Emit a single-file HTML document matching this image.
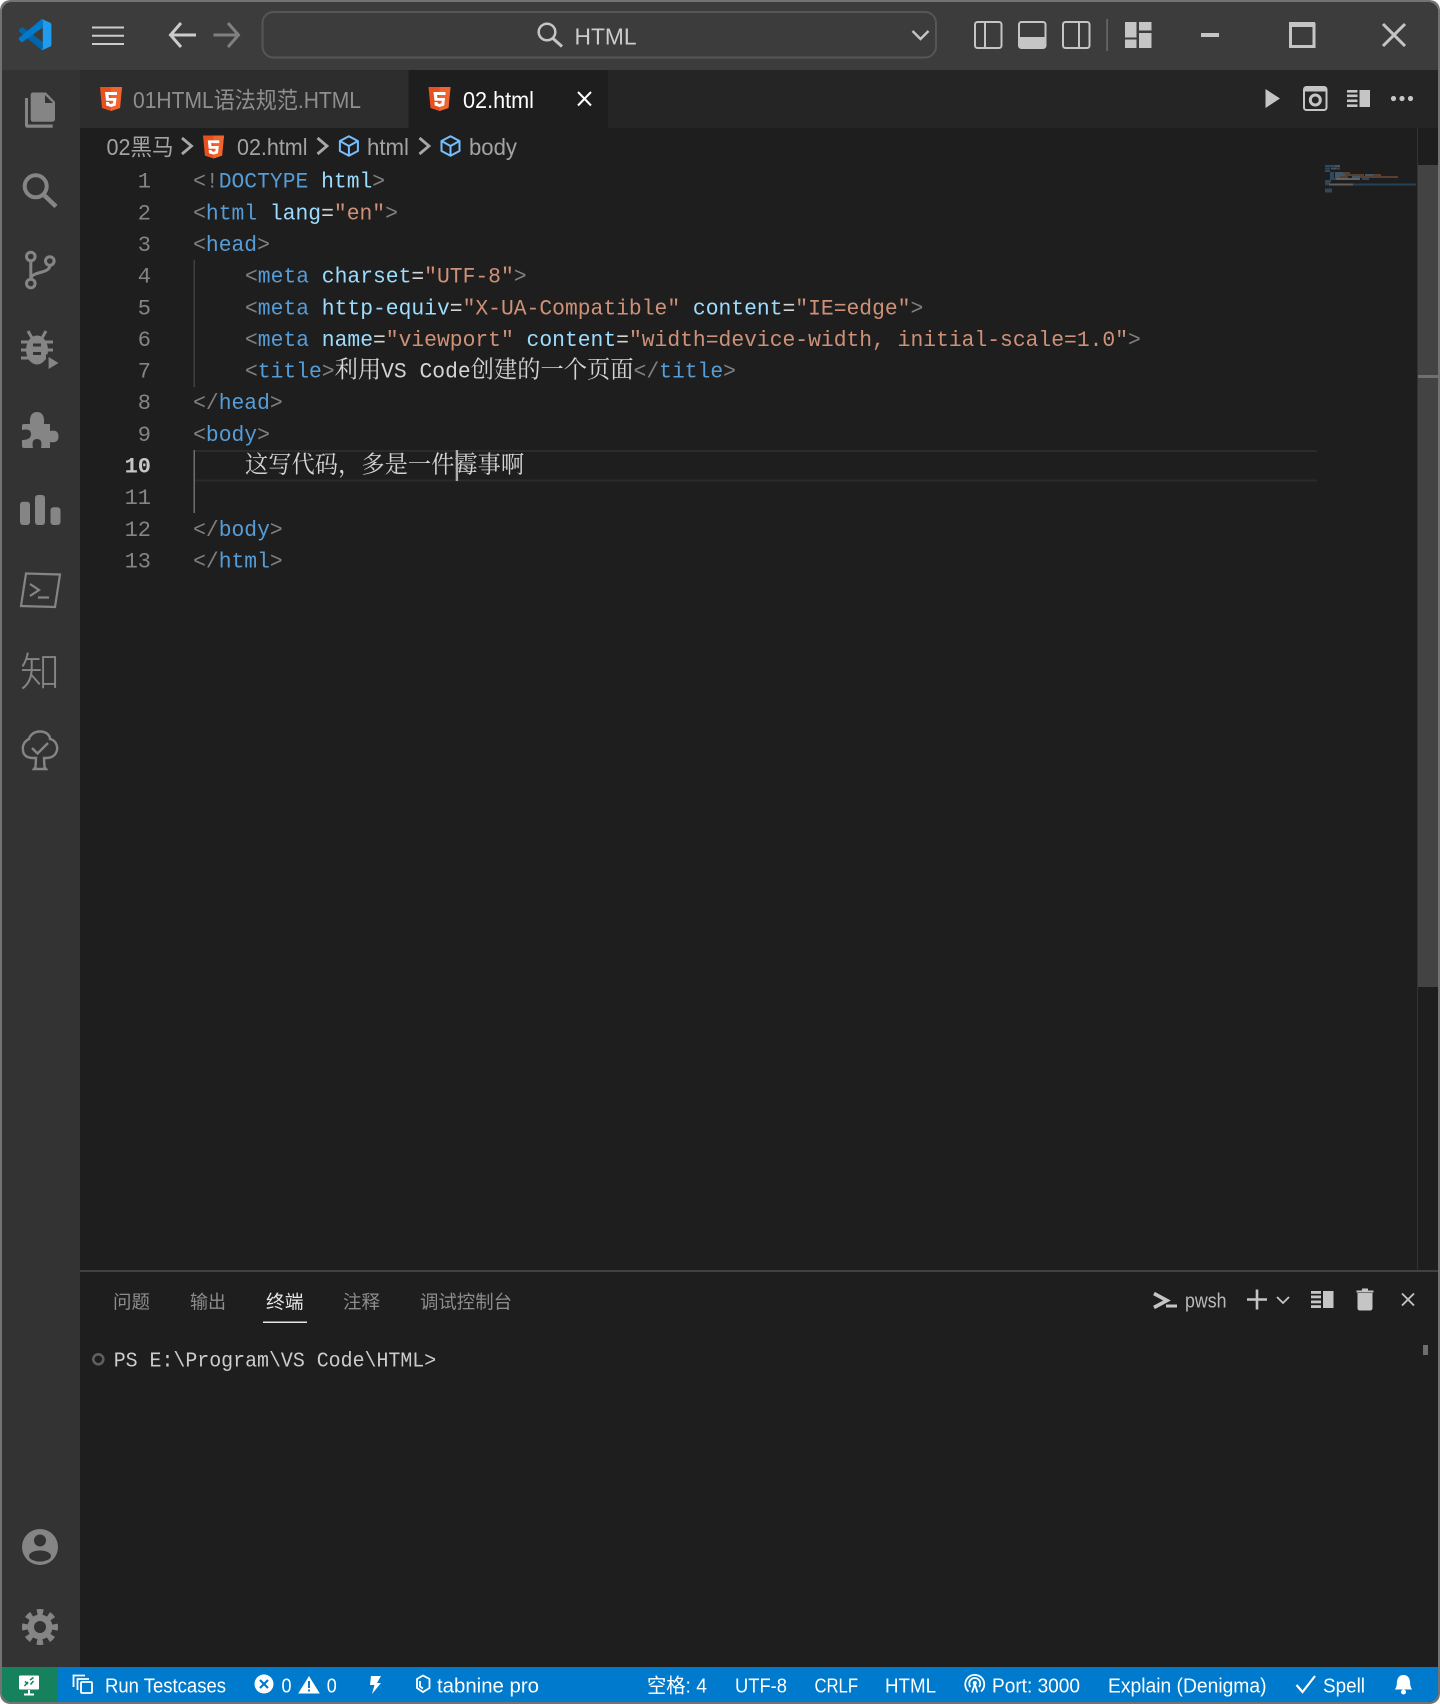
<!DOCTYPE html>
<html lang="zh"><head><meta charset="utf-8"><title>VS Code</title>
<style>
html,body{margin:0;padding:0;background:#fff;width:1440px;height:1704px;overflow:hidden}
svg{display:block}
text{white-space:pre}
.u{font-family:"Liberation Sans","Noto Sans CJK SC",sans-serif;font-size:23px;fill:#ccc}
.b{font-family:"Liberation Sans","Noto Sans CJK SC",sans-serif;font-size:23px;fill:#a3a3a3}
.p{font-family:"Noto Sans CJK SC","Liberation Sans",sans-serif;font-size:18.5px;fill:#8c8c8c}
.st{font-family:"Liberation Sans","Noto Sans CJK SC",sans-serif;font-size:20px;fill:#fff}
.m{font-family:"Liberation Mono","Noto Serif CJK SC",monospace;font-size:22px;fill:#d4d4d4}
.n{font-family:"Liberation Mono",monospace;font-size:22px;fill:#858585}
.g{fill:#808080}.t{fill:#569cd6}.a{fill:#9cdcfe}.s{fill:#ce9178}
.c{font-family:"Noto Serif CJK SC","Liberation Serif",serif;font-size:24px;fill:#d4d4d4}
</style></head><body>
<svg width="1440" height="1704" viewBox="0 0 1440 1704" xmlns="http://www.w3.org/2000/svg">
<defs>
<clipPath id="win"><rect x="2" y="2" width="1436" height="1700" rx="10"/></clipPath>
<symbol id="h5" viewBox="0 0 22 24"><path d="M0 0H22L20 21 11 24 2 21Z" fill="#e8501f"/><path d="M11 0H22L20 21 11 24Z" fill="#f0652f"/><path d="M5 5H17V8H8.5L9 11H16.5L15.7 18.5 11 20 6.2 18.5 6 15H9L9.2 16.3 11 17 13 16.3 13.3 13.8H6Z" fill="#fff"/></symbol>
<symbol id="cube" viewBox="0 0 21 22"><path d="M10.5 1.2 19.5 6V16L10.5 20.8 1.5 16V6ZM1.5 6 10.5 11 19.5 6M10.5 11V20.8" fill="none" stroke="#75beff" stroke-width="2" stroke-linejoin="round"/></symbol>
</defs>
<rect x="0" y="0" width="1440" height="1704" rx="10" fill="#737373"/>
<g clip-path="url(#win)">
<rect x="2" y="2" width="1436" height="1700" fill="#1e1e1e"/>
<rect x="2" y="2" width="1436" height="68" fill="#3c3c3c"/>
<rect x="2" y="70" width="78" height="1597" fill="#333"/>
<rect x="80" y="70" width="1358" height="58" fill="#252526"/>
<rect x="80" y="70" width="328.5" height="58" fill="#2d2d2d"/>
<rect x="408.5" y="70" width="199.5" height="58" fill="#1e1e1e"/>

<!-- titlebar -->
<g transform="translate(18.4 18.7) scale(.33 .32)">
<path d="M2 34 9 27Q11 26 13 27L74 73V97L71 99 2 40Q0 37 2 34Z" fill="#0065a9"/>
<path d="M71 1 2 60Q0 63 2 66L9 73Q11 74 13 73L74 27V3Z" fill="#007acc"/>
<path d="M71 1 97 13Q100 15 100 18V82Q100 85 97 87L71 99Q74 95 74 92V8Q74 4 71 1Z" fill="#1f9cf0"/>
</g>
<path d="M92 27.5H124M92 35.7H124M92 44H124" stroke="#ccc" stroke-width="2" fill="none"/>
<path d="M181 23 170.5 35 181 47M171 35H196" stroke="#ccc" stroke-width="3" fill="none"/>
<path d="M228 23 238.5 35 228 47M238 35H213.5" stroke="#808080" stroke-width="3" fill="none"/>
<rect x="262.500" y="12" width="673.500" height="45.500" rx="11" fill="#3c3c3c" stroke="#565656" stroke-width="2"/>
<circle cx="547" cy="32" r="8.300" fill="none" stroke="#c5c5c5" stroke-width="2.500"/>
<path d="M553 38.500 562 46.500" stroke="#c5c5c5" stroke-width="3"/>
<text class="u" x="574.500" y="44.500" textLength="62" lengthAdjust="spacingAndGlyphs">HTML</text>
<path d="M912.500 31 920.500 39 928.500 31" stroke="#c5c5c5" stroke-width="2.400" fill="none"/>
<g fill="none" stroke="#c5c5c5" stroke-width="2">
<rect x="975" y="22" width="26.500" height="26" rx="2.500"/><path d="M985 22V48"/>
<rect x="1019" y="22" width="26.500" height="26" rx="2.500"/>
<rect x="1063" y="22" width="26.500" height="26" rx="2.500"/><path d="M1079 22V48"/>
</g>
<path d="M1019 37H1045.500V46Q1045.500 48 1043 48H1021Q1019 48 1019 46Z" fill="#c5c5c5"/>
<rect x="1106.500" y="19" width="1.200" height="32" fill="#777"/>
<g fill="#c5c5c5"><rect x="1125" y="22" width="11.500" height="15.500"/><rect x="1125" y="39.500" width="11.500" height="8.500"/><rect x="1139" y="22" width="12.500" height="8.500"/><rect x="1139" y="33" width="12.500" height="15"/></g>
<rect x="1201" y="33" width="18" height="4" fill="#c5c5c5"/>
<rect x="1290.500" y="24.500" width="23.500" height="22" fill="none" stroke="#c5c5c5" stroke-width="3"/><rect x="1289" y="22" width="26" height="5" fill="#c5c5c5"/>
<path d="M1383 24 1405 46M1405 24 1383 46" stroke="#c5c5c5" stroke-width="3"/>

<!-- tabs -->
<use href="#h5" x="100" y="87" width="22" height="24"/>
<text class="u" style="fill:#8f8f8f" x="133" y="108" textLength="228" lengthAdjust="spacingAndGlyphs">01HTML语法规范.HTML</text>
<use href="#h5" x="428.500" y="87" width="22" height="24"/>
<text class="u" style="fill:#fff" x="463" y="108" textLength="71" lengthAdjust="spacingAndGlyphs">02.html</text>
<path d="M578 92 591 105.500M591 92 578 105.500" stroke="#fff" stroke-width="2"/>
<path d="M1265.500 89 1280 98.500 1265.500 108Z" fill="#c5c5c5"/>
<rect x="1304" y="87" width="22.500" height="23" rx="2.500" fill="#252526" stroke="#c5c5c5" stroke-width="2"/>
<rect x="1304" y="87" width="22.500" height="4.500" fill="#c5c5c5"/>
<circle cx="1315.300" cy="100" r="5" fill="none" stroke="#c5c5c5" stroke-width="3"/>
<g fill="#c5c5c5"><rect x="1347" y="90" width="10.500" height="2.600"/><rect x="1347" y="94.500" width="10.500" height="2.600"/><rect x="1347" y="99.500" width="10.500" height="2.600"/><rect x="1347" y="104.400" width="10.500" height="2.600"/><rect x="1359.500" y="90" width="10.500" height="17"/>
<circle cx="1393.500" cy="98.500" r="2.600"/><circle cx="1402" cy="98.500" r="2.600"/><circle cx="1410.500" cy="98.500" r="2.600"/></g>

<!-- breadcrumb -->
<text class="b" x="106.500" y="155" textLength="67" lengthAdjust="spacingAndGlyphs">02黑马</text>
<path d="M182 138 191.500 146 182 154M317.500 138 327 146 317.500 154M419.500 138 429 146 419.500 154" fill="none" stroke="#a8a8a8" stroke-width="2.800"/>
<use href="#h5" x="203" y="135" width="21" height="24"/>
<text class="b" x="237" y="155" textLength="70.500" lengthAdjust="spacingAndGlyphs">02.html</text>
<use href="#cube" x="338.400" y="135" width="21" height="22"/>
<text class="b" x="367" y="155" textLength="42" lengthAdjust="spacingAndGlyphs">html</text>
<use href="#cube" x="440" y="135" width="21" height="22"/>
<text class="b" x="469" y="155" textLength="48" lengthAdjust="spacingAndGlyphs">body</text>

<!-- current line -->
<rect x="194" y="450" width="1123" height="2" fill="#2b2b2b"/>
<rect x="194" y="479.500" width="1123" height="2" fill="#2b2b2b"/>
<rect x="193.500" y="260" width="1.500" height="127" fill="#404040"/>
<rect x="193.500" y="450" width="1.500" height="63" fill="#6e6e6e"/>

<!-- line numbers -->
<text class="n" text-anchor="end" x="151" y="187.700">1</text><text class="n" text-anchor="end" x="151" y="219.300">2</text><text class="n" text-anchor="end" x="151" y="251">3</text><text class="n" text-anchor="end" x="151" y="282.600">4</text><text class="n" text-anchor="end" x="151" y="314.300">5</text><text class="n" text-anchor="end" x="151" y="345.900">6</text><text class="n" text-anchor="end" x="151" y="377.600">7</text><text class="n" text-anchor="end" x="151" y="409.200">8</text><text class="n" text-anchor="end" x="151" y="440.900">9</text><text class="n" text-anchor="end" style="fill:#c6c6c6;font-weight:bold" x="151" y="472.500">10</text><text class="n" text-anchor="end" x="151" y="504.200">11</text><text class="n" text-anchor="end" x="151" y="535.800">12</text><text class="n" text-anchor="end" x="151" y="567.500">13</text>

<!-- code -->
<g transform="scale(.97 1)">
<text class="m" x="199.100" y="187.700"><tspan class="g">&lt;!</tspan><tspan class="t">DOCTYPE</tspan> <tspan class="a">html</tspan><tspan class="g">&gt;</tspan></text>
<text class="m" x="199.100" y="219.300"><tspan class="g">&lt;</tspan><tspan class="t">html</tspan> <tspan class="a">lang</tspan>=<tspan class="s">"en"</tspan><tspan class="g">&gt;</tspan></text>
<text class="m" x="199.100" y="251"><tspan class="g">&lt;</tspan><tspan class="t">head</tspan><tspan class="g">&gt;</tspan></text>
<text class="m" x="252.600" y="282.600"><tspan class="g">&lt;</tspan><tspan class="t">meta</tspan> <tspan class="a">charset</tspan>=<tspan class="s">"UTF-8"</tspan><tspan class="g">&gt;</tspan></text>
<text class="m" x="252.600" y="314.300"><tspan class="g">&lt;</tspan><tspan class="t">meta</tspan> <tspan class="a">http-equiv</tspan>=<tspan class="s">"X-UA-Compatible"</tspan> <tspan class="a">content</tspan>=<tspan class="s">"IE=edge"</tspan><tspan class="g">&gt;</tspan></text>
<text class="m" x="252.600" y="345.900"><tspan class="g">&lt;</tspan><tspan class="t">meta</tspan> <tspan class="a">name</tspan>=<tspan class="s">"viewport"</tspan> <tspan class="a">content</tspan>=<tspan class="s">"width=device-width, initial-scale=1.0"</tspan><tspan class="g">&gt;</tspan></text>
<text class="m" x="252.600" y="377.600"><tspan class="g">&lt;</tspan><tspan class="t">title</tspan><tspan class="g">&gt;</tspan><tspan class="c">利用</tspan>VS Code<tspan class="c">创建的一个页面</tspan><tspan class="g">&lt;/</tspan><tspan class="t">title</tspan><tspan class="g">&gt;</tspan></text>
<text class="m" x="199.100" y="409.200"><tspan class="g">&lt;/</tspan><tspan class="t">head</tspan><tspan class="g">&gt;</tspan></text>
<text class="m" x="199.100" y="440.900"><tspan class="g">&lt;</tspan><tspan class="t">body</tspan><tspan class="g">&gt;</tspan></text>
<text class="c" x="252.600" y="472.500">这写代码，多是一件霉事啊</text>
<text class="m" x="199.100" y="535.800"><tspan class="g">&lt;/</tspan><tspan class="t">body</tspan><tspan class="g">&gt;</tspan></text>
<text class="m" x="199.100" y="567.500"><tspan class="g">&lt;/</tspan><tspan class="t">html</tspan><tspan class="g">&gt;</tspan></text>
</g>
<rect x="455.700" y="450" width="2.400" height="31" fill="#aeafad"/>

<!-- minimap -->
<g opacity=".75">
<rect x="1325" y="165" width="10" height="2" fill="#35566f"/><rect x="1335" y="165" width="5" height="2" fill="#4a6a80"/>
<rect x="1325" y="167.500" width="5" height="2" fill="#35566f"/><rect x="1331" y="167.500" width="5" height="2" fill="#4a6a80"/><rect x="1336" y="167.500" width="4" height="2" fill="#6b4a3c"/>
<rect x="1325" y="170" width="5" height="2" fill="#35566f"/>
<rect x="1330" y="172" width="4" height="2" fill="#35566f"/><rect x="1335" y="172" width="8" height="2" fill="#4a6a80"/><rect x="1343" y="172" width="7" height="2" fill="#6b4a3c"/>
<rect x="1330" y="174" width="4" height="2" fill="#35566f"/><rect x="1335" y="174" width="10" height="2" fill="#4a6a80"/><rect x="1345" y="174" width="19" height="2" fill="#6b4a3c"/><rect x="1365" y="174" width="8" height="2" fill="#4a6a80"/><rect x="1373" y="174" width="8" height="2" fill="#6b4a3c"/>
<rect x="1330" y="176" width="4" height="2" fill="#35566f"/><rect x="1335" y="176" width="5" height="2" fill="#4a6a80"/><rect x="1340" y="176" width="8" height="2" fill="#6b4a3c"/><rect x="1352" y="176" width="8" height="2" fill="#4a6a80"/><rect x="1360" y="176" width="38" height="2" fill="#6b4a3c"/>
<rect x="1330" y="178" width="6" height="2" fill="#35566f"/><rect x="1336" y="178" width="24" height="2" fill="#777"/><rect x="1362" y="178" width="7" height="2" fill="#35566f"/>
<rect x="1325" y="180" width="6" height="2" fill="#35566f"/><rect x="1325" y="182" width="5" height="1.500" fill="#35566f"/>
<rect x="1325" y="183.500" width="91" height="2" fill="#264f6e"/><rect x="1329" y="183.500" width="24" height="2" fill="#777"/>
<rect x="1325" y="188.500" width="7" height="2" fill="#35566f"/><rect x="1325" y="190.500" width="7" height="2" fill="#35566f"/>
</g>

<!-- editor scrollbar -->
<rect x="1417" y="128" width="1" height="1143" fill="#333"/>
<rect x="1418" y="165" width="20" height="822" fill="#434343"/>
<rect x="1418" y="375" width="20" height="3" fill="#707070"/>

<!-- panel -->
<rect x="80" y="1270" width="1358" height="2" fill="#414141"/>
<text class="p" x="113" y="1308.500" textLength="37" lengthAdjust="spacingAndGlyphs">问题</text>
<text class="p" x="190" y="1308.500" textLength="36" lengthAdjust="spacingAndGlyphs">输出</text>
<text class="p" style="fill:#e7e7e7" x="266" y="1308.500" textLength="37.500" lengthAdjust="spacingAndGlyphs">终端</text>
<text class="p" x="343" y="1308.500" textLength="37" lengthAdjust="spacingAndGlyphs">注释</text>
<text class="p" x="420" y="1308.500" textLength="92" lengthAdjust="spacingAndGlyphs">调试控制台</text>
<rect x="263" y="1321.500" width="44" height="1.500" fill="#e7e7e7"/>
<circle cx="98.300" cy="1359.300" r="5" fill="none" stroke="#5f5f5f" stroke-width="2.600"/>
<text class="m" style="font-size:21px;fill:#ccc" x="113.700" y="1366.700" textLength="322.500" lengthAdjust="spacingAndGlyphs">PS E:\Program\VS Code\HTML&gt;</text>
<path d="M1154 1293.500 1167 1300.500 1154 1307.500" fill="none" stroke="#c5c5c5" stroke-width="3.600"/>
<rect x="1166" y="1304.500" width="11" height="3" fill="#c5c5c5"/>
<text class="st" style="fill:#b9b9b9" x="1185" y="1307.500" textLength="41.500" lengthAdjust="spacingAndGlyphs">pwsh</text>
<path d="M1247 1299.500H1267M1257 1289.500V1309.500" stroke="#c5c5c5" stroke-width="2.600"/>
<path d="M1277 1297 1283 1303 1289 1297" fill="none" stroke="#c5c5c5" stroke-width="1.800"/>
<g fill="#c5c5c5"><rect x="1311" y="1291" width="10" height="2.800"/><rect x="1311" y="1295.500" width="10" height="2.800"/><rect x="1311" y="1300.500" width="10" height="2.800"/><rect x="1311" y="1305.200" width="10" height="2.800"/><rect x="1323" y="1291" width="10.500" height="17"/>
<path d="M1357.500 1293H1372.500V1308Q1372.500 1310.500 1370 1310.500H1360Q1357.500 1310.500 1357.500 1308Z"/><rect x="1356.500" y="1290.500" width="17" height="2"/><rect x="1362" y="1288.500" width="6" height="2"/></g>
<path d="M1402 1293.500 1414 1305.500M1414 1293.500 1402 1305.500" stroke="#c5c5c5" stroke-width="1.800"/>
<rect x="1423" y="1345" width="5" height="10" fill="#6e6e6e"/>

<!-- activity bar -->
<g fill="#858585">
<path d="M33 92.500H46L55 102V119Q55 121.700 52 121.700H33Q30.700 121.700 30.700 119V95Q30.700 92.500 33 92.500Z"/>
<path d="M45 95V103H53Z" fill="#333"/>
<path d="M25 98H28V124.500H52.700V127.700H27Q25 127.700 25 125Z"/>
<path d="M21 342H53M21 350H53M21 358H48M28 331 32 338M46 331 42 338" stroke="#858585" stroke-width="3" fill="none"/>
<ellipse cx="37" cy="350" rx="11" ry="14.500"/>
<rect x="33" y="343.500" width="8" height="3" fill="#333"/><rect x="33" y="352" width="8" height="3" fill="#333"/>
<path d="M46 354 60 363 46 372Z" fill="#333"/>
<path d="M48.600 357 58.500 363 48.600 369Z"/>
<path d="M24 424H30Q29 412 37 412Q45 412 44 424H50V431Q58.500 429 58.500 436.500Q58.500 443.500 50 442V448H41Q43 439 37 439Q31 439 33 448H24Q22 448 22 446V440Q31 440 31 434Q31 428 22 430V426Q22 424 24 424Z"/>
<rect x="20" y="501.700" width="10" height="23.300" rx="3"/><rect x="35" y="495" width="10" height="30" rx="3"/><rect x="50.500" y="507.300" width="10" height="17.700" rx="3"/>
<text style="font-family:'Noto Sans CJK SC',sans-serif;font-size:40px;font-weight:300" x="20" y="686">知</text>
<circle cx="40" cy="1547" r="18"/>
<circle cx="40" cy="1540.500" r="6" fill="#333"/><ellipse cx="40" cy="1556" rx="11" ry="5.500" fill="#333"/>
<circle cx="40" cy="1627" r="12.500"/>
<circle cx="40" cy="1627" r="15" fill="none" stroke="#858585" stroke-width="6" stroke-dasharray="6 5.780" stroke-dashoffset="3"/>
<circle cx="40" cy="1627" r="6" fill="#333"/>
</g>
<g fill="none" stroke="#858585">
<circle cx="35.700" cy="186.300" r="11" stroke-width="4"/><path d="M44.500 195.500 56 206.500" stroke-width="4.500"/>
<circle cx="30.800" cy="256.500" r="4.300" stroke-width="3"/><circle cx="30.800" cy="283.500" r="4.300" stroke-width="3"/><circle cx="49.800" cy="261" r="4.300" stroke-width="3"/>
<path d="M30.800 261V279M49.800 265.500C49.800 274 31 271 31 279" stroke-width="3"/>
<path d="M26 573.500 60 574.500 55 607 21 606Z" stroke-width="2.200"/>
<path d="M30 584 39 590 30 596M38 597.500H49" stroke-width="2.200"/>
<path d="M40 731.500C46 731.500 50 735 50 739C55 740 58 745 57 750C56 755 52 758 46 758H44L44.500 767 46 769H34L35.500 767 36 758H33C27 758 23 755 23 750C22 745 25 741 29 739C30 735 34 731.500 40 731.500Z" stroke-width="2.400"/>
<path d="M32 748 37.500 753.500 48 743" stroke-width="2.400"/>
</g>

<!-- status bar -->
<rect x="2" y="1667" width="1436" height="35" fill="#007acc"/>
<rect x="2" y="1667" width="55.500" height="35" fill="#16825d"/>
<rect x="19" y="1675.500" width="20" height="14" rx="1" fill="#fff"/>
<path d="M29 1690V1694M24 1694.500H34" stroke="#fff" stroke-width="2"/>
<path d="M24.500 1686 28 1682M30 1680 33.500 1677.500M25 1681.500 28 1684M30.500 1684.500 33.500 1681" stroke="#16825d" stroke-width="1.500" fill="none"/>
<g fill="none" stroke="#fff" stroke-width="1.800">
<path d="M73.500 1687V1675.500H85M77.500 1690V1679H89"/><rect x="81" y="1682" width="11" height="11" rx="1"/>
<path d="M417 1679 423 1675.500 429.500 1679V1688L423 1692 417 1688ZM420 1681V1686.500L423 1688.500"/>
<path d="M1296.500 1685 1302.500 1692 1315 1676" stroke-width="2.200"/>
<path d="M968.500 1691.500A9.500 9.500 0 1 1 981 1691.500"/>
<path d="M970.500 1687A5.500 5.500 0 1 1 979 1687"/>
<path d="M972 1692.500 974.800 1684 977.500 1692.500"/>
</g>
<circle cx="274.800" cy="1683" r="0" fill="#fff"/>
<circle cx="974.800" cy="1683" r="2" fill="#fff"/>
<circle cx="264" cy="1684" r="9.500" fill="#fff"/>
<path d="M260 1680 268 1688M268 1680 260 1688" stroke="#007acc" stroke-width="2.200"/>
<path d="M309 1676 319.800 1693.500H298.200Z" fill="#fff"/>
<rect x="308" y="1681" width="2" height="7" fill="#007acc"/><rect x="308" y="1689.500" width="2" height="2" fill="#007acc"/>
<path d="M371 1676H381L377 1683H381L372 1694 374.500 1685H370Z" fill="#fff"/>
<path d="M1403.500 1675C1398 1675 1396.800 1680 1396.800 1684 1396.800 1687 1395 1689 1395 1689.500H1412C1412 1689 1410.200 1687 1410.200 1684 1410.200 1680 1409 1675 1403.500 1675Z" fill="#fff"/>
<circle cx="1403.500" cy="1692" r="2.500" fill="#fff"/>
<text class="st" x="105" y="1692.500" textLength="121" lengthAdjust="spacingAndGlyphs">Run Testcases</text>
<text class="st" x="281.500" y="1692.500" textLength="10" lengthAdjust="spacingAndGlyphs">0</text>
<text class="st" x="326.800" y="1692.500" textLength="10" lengthAdjust="spacingAndGlyphs">0</text>
<text class="st" x="437" y="1692.500" textLength="102" lengthAdjust="spacingAndGlyphs">tabnine pro</text>
<text class="st" x="647" y="1692.500" textLength="60" lengthAdjust="spacingAndGlyphs">空格: 4</text>
<text class="st" x="735" y="1692.500" textLength="52" lengthAdjust="spacingAndGlyphs">UTF-8</text>
<text class="st" x="814.500" y="1692.500" textLength="43.500" lengthAdjust="spacingAndGlyphs">CRLF</text>
<text class="st" x="885" y="1692.500" textLength="51" lengthAdjust="spacingAndGlyphs">HTML</text>
<text class="st" x="992" y="1692.500" textLength="88" lengthAdjust="spacingAndGlyphs">Port: 3000</text>
<text class="st" x="1108" y="1692.500" textLength="158.500" lengthAdjust="spacingAndGlyphs">Explain (Denigma)</text>
<text class="st" x="1323" y="1692.500" textLength="42" lengthAdjust="spacingAndGlyphs">Spell</text>
</g>
<path d="M0 0H10A10 10 0 0 0 0 10Z" fill="#fff"/>
<path d="M1440 0H1430A10 10 0 0 1 1440 10Z" fill="#fff"/>
<path d="M0 1704H10A10 10 0 0 1 0 1694Z" fill="#fff"/>
<path d="M1440 1704H1430A10 10 0 0 0 1440 1694Z" fill="#fff"/>
</svg>
</body></html>
